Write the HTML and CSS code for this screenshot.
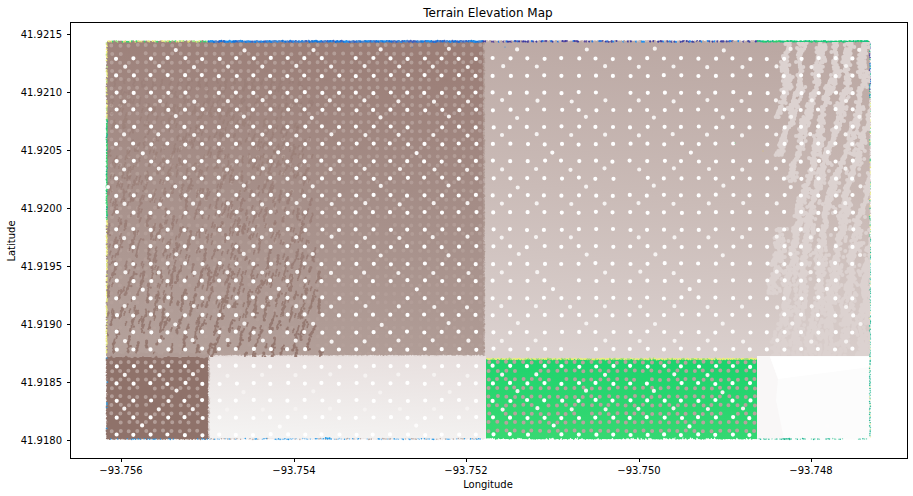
FILE: index.html
```html
<!DOCTYPE html>
<html lang="en">
<head>
<meta charset="utf-8">
<title>Terrain Elevation Map</title>
<link rel="stylesheet" href="styles.css">
</head>
<body>
<main class="figure">
<svg class="chart" viewBox="0 0 913 496" role="img" aria-label="Terrain Elevation Map">
  <defs>
    <linearGradient id="west" x1="0.6" y1="0" x2="0.4" y2="1">
      <stop offset="0" stop-color="#9b7e77"/><stop offset="0.5" stop-color="#a68f89"/><stop offset="1" stop-color="#b3a09a"/>
    </linearGradient>
    <linearGradient id="east" x1="0.56" y1="0" x2="0.44" y2="1">
      <stop offset="0" stop-color="#bba8a3"/><stop offset="0.5" stop-color="#cabbb7"/><stop offset="1" stop-color="#dbd1cf"/>
    </linearGradient>
    <linearGradient id="pale" x1="0.6" y1="0" x2="0.4" y2="1">
      <stop offset="0" stop-color="#e8e0df"/><stop offset="1" stop-color="#f4f3f2"/>
    </linearGradient>
    <linearGradient id="green" x1="0.6" y1="0" x2="0.4" y2="1">
      <stop offset="0" stop-color="#1dd36d"/><stop offset="1" stop-color="#37d872"/>
    </linearGradient>
    <clipPath id="westClip"><rect x="107" y="42" width="377" height="315"/></clipPath>
    <clipPath id="eastClip"><rect x="484" y="42" width="386" height="314"/></clipPath>
  </defs>

  <g class="fields">
    <rect x="107" y="41" width="377" height="317" fill="url(#west)"/>
    <rect x="484" y="41" width="386" height="319" fill="url(#east)"/>
    <rect x="107" y="357" width="102" height="82" fill="#8f726a"/>
    <rect x="209" y="356" width="277" height="83" fill="url(#pale)"/>
    <rect x="486" y="359" width="271" height="80" fill="url(#green)"/>
    <rect x="757" y="356" width="113" height="83" fill="#fcfcfc"/>
    <path d="M757 356H770L778 379L776 400L784 439H757Z" fill="#f9f7f7"/>
    <path d="M770 357H870V367L778 379Z" fill="#ffffff"/>
  </g>
  <g id="edges"></g>
  <g id="westDots" clip-path="url(#westClip)"></g>
  <g id="westStreaks" clip-path="url(#westClip)"></g>
  <g id="eastStreaks" clip-path="url(#eastClip)"></g>
  <g id="samples"></g>

  <rect class="axis" x="70.5" y="22.5" width="837" height="436"/>
  <g id="ticks"></g>
  <text class="title" x="488" y="17">Terrain Elevation Map</text>
  <text class="label mid" x="488" y="488">Longitude</text>
  <text class="label mid" transform="translate(15 241) rotate(-90)">Latitude</text>
</svg>
</main>
<script src="chart.js"></script>
</body>
</html>
```
FILE: styles.css
```css
body {
  margin: 0;
  background: #fff;
}

.figure {
  width: 100%;
}

.chart {
  display: block;
  width: 100%;
  height: auto;
  font-family: "DejaVu Sans", sans-serif;
}

.axis {
  fill: none;
  stroke: #000;
  stroke-width: 1;
}

.label {
  font-size: 10px;
  fill: #000;
}

.title {
  font-size: 12px;
  text-anchor: middle;
}

.mid {
  text-anchor: middle;
}

.end {
  text-anchor: end;
}
```
FILE: chart.js
```js
const NS = "http://www.w3.org/2000/svg";
let seed = 7;

// Small repeatable generator, so the map is the same on every load.
function rnd() {
  seed = (seed * 16807) % 2147483647;
  return seed / 2147483647;
}
const jit = a => (rnd() * 2 - 1) * a;

function add(parent, name, attrs, text) {
  const el = document.createElementNS(NS, name);
  for (const k in attrs) el.setAttribute(k, attrs[k]);
  if (text) el.textContent = text;
  parent.appendChild(el);
  return el;
}
const group = id => document.getElementById(id);
const disc = (x, y, r) =>
  `M${(x - r).toFixed(1)} ${y.toFixed(1)}a${r} ${r} 0 1 0 ${2 * r} 0a${r} ${r} 0 1 0 ${-2 * r} 0`;

// Axes
const ticks = group("ticks");
["41.9215", "41.9210", "41.9205", "41.9200", "41.9195", "41.9190", "41.9185", "41.9180"].forEach((t, i) => {
  const y = 34 + i * 58;
  add(ticks, "path", { class: "axis", d: `M67 ${y + 0.5}H70` });
  add(ticks, "text", { class: "label end", x: 62, y: y + 4 }, t);
});
["−93.756", "−93.754", "−93.752", "−93.750", "−93.748"].forEach((t, i) => {
  const x = Math.round(121 + i * 172.5);
  add(ticks, "path", { class: "axis", d: `M${x + 0.5} 459V462` });
  add(ticks, "text", { class: "label mid", x, y: 474 }, t);
});

// Ragged field borders
function edge(x0, y0, x1, y1, colors, r) {
  const n = Math.hypot(x1 - x0, y1 - y0) / 1.6;
  for (let i = 0; i <= n; i++) {
    const t = i / n;
    const fill = colors[Math.floor(rnd() * colors.length)];
    const x = x0 + (x1 - x0) * t + jit(0.4);
    const y = y0 + (y1 - y0) * t + jit(0.4);
    add(group("edges"), "circle", { cx: x.toFixed(1), cy: y.toFixed(1), r, fill });
  }
}
edge(108, 41.4, 208, 41.4, ["#f3f38a", "#dce078", "#35d873", "#9be886", "#a08a7c"], 1);
edge(209, 41.4, 484, 41.4, ["#1173dd", "#2090ee", "#1580e4", "#3d62c0", "#4a86d0"], 1.2);
edge(484, 41.4, 612, 41.4, ["#3939a0", "#2777dd", "#5d4b9b", "#cbb9b7", "#bba8a3"], 1.1);
edge(612, 41.4, 758, 41.4, ["#3c3da0", "#2090ee", "#4448a4", "#cbb9b7", "#bba8a3"], 1.1);
edge(758, 41.4, 869, 41.4, ["#10c878", "#12c87a", "#20b890", "#28d070"], 1.1);
edge(106.8, 43, 106.8, 120, ["#f3f37e", "#dce078", "#b8dc80", "#a08a7c"], 0.9);
edge(106.8, 120, 106.8, 220, ["#28d070", "#18b880", "#33d872"], 0.9);
edge(106.8, 220, 106.8, 356, ["#f3f37e", "#e6e67a", "#dce078", "#a08a7c"], 0.9);
edge(107, 358, 107, 438, ["#8f726a", "#8f726a", "#a98d86", "#8f726a", "#8f726a", "#3b91cc"], 1);
edge(870, 43, 870, 100, ["#4448a4", "#c9bbb8", "#30b898", "#2888d8"], 0.8);
edge(870, 100, 870, 240, ["#e8e880", "#50c890", "#d0c4c0", "#d0c4c0"], 0.8);
edge(870, 240, 870, 438, ["#28b898", "#60ccb0", "#e8e8b0", "#30b898"], 0.8);
edge(108, 439, 208, 439, ["#8f726a", "#2f8fd6", "#9a807a"], 0.8);
edge(210, 439, 484, 439, ["#2f9be6", "#eeeaea", "#b8aaa6", "#8cc4ee"], 0.8);
edge(486, 438.7, 757, 438.7, ["#35d873", "#35d873", "#fff"], 0.8);
edge(759, 439, 869, 439, ["#26b896", "#fcfcfc", "#8adcc0"], 0.8);
edge(487, 359, 756, 359, ["#efef70", "#e8f080", "#a8e070"], 1);
edge(209, 357, 209, 438, ["#e2d8d6", "#cbbdb9", "#efebea"], 1);
edge(210, 356, 484, 356, ["#e9e1e0", "#e5dcda"], 1);
edge(484, 43, 484, 356, ["#ad9891", "#b9a7a2"], 1);
edge(326, 438.4, 330, 438.4, ["#1e9be8"], 1);
edge(783, 438.8, 792, 438.8, ["#18b68c"], 0.8);

// Dense grey samples
const P = 8.57;
function dense(parent, x0, x1, y0, y1, opacity) {
  for (let j = 0; j < 47; j++) {
    const y = 45.2 + j * P;
    if (y < y0 || y > y1) continue;
    let d = "";
    for (let i = 0; i < 90; i++) {
      const x = 111.8 + i * P;
      if (x < x0 || x > x1) continue;
      if (rnd() < 0.03) continue;
      d += disc(x + jit(0.5), y + jit(0.5), 2);
    }
    add(group(parent), "path", { d, fill: "#b7a39d", opacity: opacity(y) });
  }
}
dense("westDots", 108, 482, 42, 354, y => (0.85 - Math.max(0, y - 80) / 700).toFixed(2));
dense("samples", 109, 206, 359, 437, () => 0.9);
dense("samples", 488, 755, 359, 437, () => 1);

// Dark furrows in the west field: short broken strokes along slanted tracks,
// collected in bands that grow stronger towards the south
const bands = Array.from({ length: 12 }, () => "");
const mark = (x, y, r) => {
  const b = Math.max(0, Math.min(11, Math.floor((y - 80) / 24)));
  bands[b] += disc(x, y, r);
};
for (let c = 0; c < 32; c++) {
  const start = 116 + c * 9.2;
  let gap = 0;
  let run = 4 + rnd() * 8;
  let drift = 0;
  for (let y = 80; y < 357; y += 1.5) {
    const x = start - (y - 80) * 0.24 + drift;
    const depth = Math.max(0, Math.min(1, (y - 110) / 210));
    drift = Math.max(-3.5, Math.min(3.5, drift + jit(0.8)));
    if (gap > 0) {
      gap -= 1.5;
      if (gap <= 0) run = 3 + rnd() * (5 + 20 * depth);
      continue;
    }
    run -= 1.5;
    if (run <= 0) gap = 3 + rnd() * (20 - 9 * depth);
    if (x < 107 || x > 322 - Math.max(0, 300 - y) * 0.1) continue;
    mark(x + jit(0.5), y, rnd() < 0.2 + depth * 0.2 ? 1.6 : 1);
    if (rnd() < 0.1) mark(x + 2.2, y + 0.6, 1.2);
  }
}
for (let i = 0; i < 620; i++) {
  const x = 108 + rnd() * 205;
  const y = 85 + rnd() * 245;
  mark(x, y, 1);
  mark(x - 0.7, y + 1.6, 1);
  mark(x - 0.9, y + 3.2, 0.8);
}
bands.forEach((d, i) => {
  add(group("westStreaks"), "path", { d, fill: "#91736b", opacity: (0.25 + i * 0.06).toFixed(2) });
});

// Uneven southern rim
let rim = "";
for (let x = 108; x < 209; x += 3) rim += disc(x, 355 + jit(1.5), 2);
add(group("samples"), "path", { d: rim, fill: "#b09c96" });

// Light furrows in the east field
function shift(y) {
  if (y < 85) return (y - 42) * 0.05;
  if (y < 210) return 2.2 + (y - 85) * 0.28;
  return 37.2 + (y - 210) * 0.12;
}
const bounds = [[42, 781], [98, 779], [150, 777], [168, 783], [188, 795], [215, 785], [250, 776], [300, 771], [356, 769]];
function westLimit(y) {
  for (let i = 1; i < bounds.length; i++) {
    const [ya, xa] = bounds[i - 1];
    const [yb, xb] = bounds[i];
    if (y <= yb) return xa + (xb - xa) * (y - ya) / (yb - ya);
  }
  return 769;
}
let ridges = "";
for (let c = 0; c < 11; c++) {
  let wobble = 0;
  for (let y = 43; y < 357; y += 2) {
    wobble = Math.max(-3, Math.min(3, wobble + jit(1.2)));
    const x = 788 + c * 15.6 - shift(y) + wobble;
    if (x > 873 || x < westLimit(y) - 1) continue;
    const broad = Math.max(0, y - 220) / 70;
    const half = 1.9 + Math.sin(y / 10 + c * 4) * 1.2 + broad;
    if (rnd() > 0.12) ridges += disc(x - half + jit(1.3), y, 2);
    if (rnd() > 0.12) ridges += disc(x + half + jit(1.3), y + jit(0.6), 2);
    if (rnd() > 0.06) ridges += disc(x, y, 2);
    if (rnd() < 0.12) ridges += disc(x - half - 2.5, y + 1, 2);
    if (rnd() < 0.12) ridges += disc(x + half + 2.5, y, 2);
    if (y > 150 && rnd() < 0.12 + (y - 150) / 700) ridges += disc(x + 7 + jit(1.5), y, 2);
  }
}
add(group("eastStreaks"), "path", { d: ridges, fill: "#dcd2d0" });

// Regular white samples
let main = "";
for (let j = 0; j < 23; j++) {
  for (let i = 0; i < 44; i++) {
    if (rnd() < 0.008) continue;
    const x = 116.5 + i * 17.12 + jit(0.6);
    const y = 58.5 + j * 17.1 + jit(0.6);
    if (x > 757 && y > 356) continue;
    main += disc(x, y, 2.1);
  }
}
add(group("samples"), "path", { d: main, fill: "#fff" });

let second = "";
[66.6, 100.9, 134.9, 169, 203.7, 237.5, 272.4, 306.6, 341, 375, 409].forEach(y => {
  for (let i = 0; i < 22; i++) {
    const x = 124.9 + i * 34.3 + jit(1);
    if (x > 757 && y > 356) continue;
    if (i > 11 && rnd() < 0.08) continue;
    second += disc(x, y + jit(0.8), 2.1);
  }
});
[49.6, 117, 186.5, 254.5, 324, 391.5].forEach(y => {
  for (let i = 0; i < 11; i++) {
    const x = 175.8 + i * 68.4 + jit(1);
    if (x > 757 && y > 356) continue;
    second += disc(x, y + jit(1), 2.1);
  }
});
add(group("samples"), "path", { d: second, fill: "#f6f3f2" });

let third = "";
[152.7, 289.3, 426].forEach(y => {
  for (let i = 0; i < 6; i++) third += disc(142 + i * 137 + jit(1), y + jit(0.6), 2.1);
});
add(group("samples"), "path", { d: third, fill: "#fdfcfc" });

// Isolated outliers
[[412, 47, "#2c74c8"], [505, 47, "#2c8ee0"], [735, 143, "#6cc078"], [763, 151, "#d8c070"], [108, 187, "#fff"]].forEach(([cx, cy, fill]) => {
  add(group("samples"), "circle", { cx, cy, r: fill === "#fff" ? 2 : 0.6, fill });
});
```
